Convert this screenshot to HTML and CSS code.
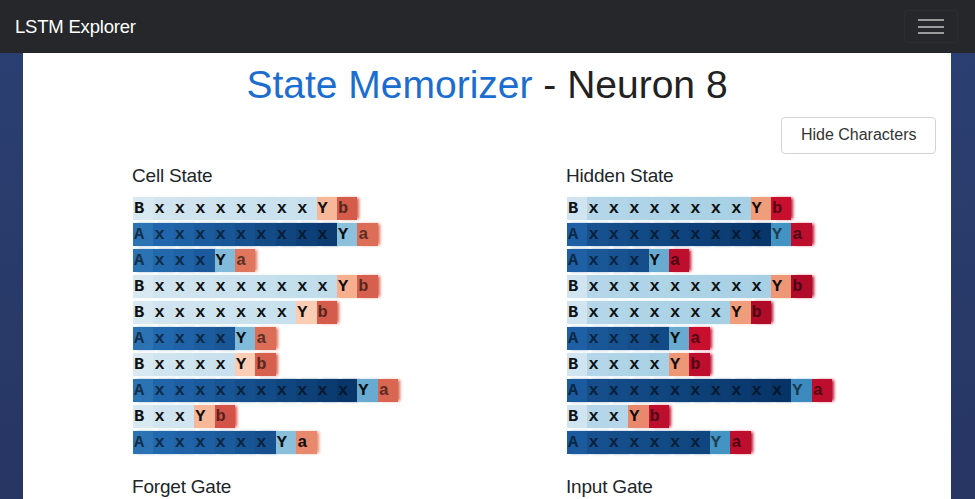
FILE: index.html
```html
<!DOCTYPE html>
<html lang="en">
<head>
    <meta charset="UTF-8">
    <meta name="viewport" content="width=device-width, initial-scale=1.0">
    <title>LSTM Explorer</title>
    <link rel="stylesheet" href="styles.css">
</head>
<body>
    <nav class="navbar">
        <a class="brand" href="#">LSTM Explorer</a>
        <button class="toggler" aria-label="Toggle navigation">
            <span class="bar"></span>
            <span class="bar"></span>
            <span class="bar"></span>
        </button>
    </nav>

    <main class="page">
        <div class="panel">
            <h1 class="title"><span class="title-name">State Memorizer</span> - Neuron 8</h1>
            <div class="toolbar">
                <button class="btn" id="toggleChars" onclick="toggleChars()">Hide Characters</button>
            </div>
            <div class="plots" id="plots"></div>
        </div>
    </main>

    <script src="script.js"></script>
</body>
</html>
```

FILE: styles.css
```css
body {
    font-family: "Liberation Sans", Arial, sans-serif;
    margin: 0;
    padding: 0;
    background: linear-gradient(180deg, #2b4173, #252f5a);
    color: #212529;
}

.navbar {
    height: 53px;
    background: #25272a;
    display: flex;
    align-items: center;
    justify-content: space-between;
    padding: 0 17px 0 15px;
}

.brand {
    color: #fff;
    font-size: 18.5px;
    text-decoration: none;
    letter-spacing: -0.2px;
}

.toggler {
    background: transparent;
    border: 1px solid rgba(255, 255, 255, 0.03);
    border-radius: 4px;
    padding: 8px 13px;
    display: flex;
    flex-direction: column;
    gap: 4.5px;
    cursor: pointer;
}

.toggler .bar {
    display: block;
    width: 26px;
    height: 2px;
    background: #9a9a9a;
}

.page {
    padding: 0 24px 0 23px;
}

.panel {
    background: #fff;
    padding-top: 9px;
    min-height: 600px;
}

.title {
    margin: 0;
    text-align: center;
    font-size: 39px;
    font-weight: normal;
    line-height: 1.2;
    color: #222;
}

.title-name {
    color: #1c6dd0;
}

.toolbar {
    display: flex;
    justify-content: flex-end;
    padding-right: 15px;
    margin-top: 8px;
}

.btn {
    font-family: inherit;
    font-size: 16px;
    line-height: 1.5;
    padding: 5.5px 18.5px;
    color: #333;
    background: #fff;
    border: 1px solid #d4d4d4;
    border-radius: 4px;
    cursor: pointer;
}

.btn:hover {
    background: #f2f2f2;
}

.plots {
    display: grid;
    grid-template-columns: 434px 434px;
    row-gap: 22px;
    padding-left: 109px;
    margin-top: 11px;
}

.plot h3 {
    margin: 0 0 9px;
    font-size: 19px;
    font-weight: normal;
    line-height: 1.2;
    letter-spacing: -0.2px;
}

.seq {
    display: flex;
    flex-direction: column;
    gap: 3px;
    padding-left: 1px;
}

.seq-row {
    display: flex;
    height: 23px;
}

.cell {
    width: 20.4px;
    height: 23px;
    line-height: 23px;
    padding-left: 1px;
    box-sizing: border-box;
    font-family: "Courier New", "Liberation Mono", monospace;
    font-weight: bold;
    font-size: 17px;
}

.plots.hide-chars .cell {
    color: transparent !important;
}
```

FILE: script.js
```js
// RdBu-ish colour scale, blue for negative, red for positive
const STOPS = [
    [-1, [5, 48, 97]],
    [-0.75, [33, 102, 172]],
    [-0.5, [67, 147, 195]],
    [-0.25, [146, 197, 222]],
    [-0.1, [209, 229, 240]],
    [0, [247, 247, 247]],
    [0.1, [253, 219, 199]],
    [0.25, [244, 165, 130]],
    [0.5, [214, 96, 77]],
    [0.8, [200, 16, 46]],
    [1, [103, 0, 31]]
];

const SEQUENCES = [
    'BxxxxxxxxYb',
    'AxxxxxxxxxYa',
    'AxxxYa',
    'BxxxxxxxxxYb',
    'BxxxxxxxYb',
    'AxxxxYa',
    'BxxxxYb',
    'AxxxxxxxxxxYa',
    'BxxYb',
    'AxxxxxxYa'
];

// [first char, first x, last x, Y, last char]
const PLOTS = [
    { name: 'Cell State', params: [
        [-0.08, -0.1, -0.12, 0.2, 0.52],
        [-0.68, -0.75, -0.95, -0.27, 0.45],
        [-0.68, -0.74, -0.8, -0.3, 0.42],
        [-0.08, -0.1, -0.14, 0.22, 0.5],
        [-0.08, -0.1, -0.12, 0.14, 0.52],
        [-0.68, -0.74, -0.82, -0.3, 0.45],
        [-0.08, -0.1, -0.12, 0.14, 0.5],
        [-0.68, -0.76, -0.97, -0.38, 0.48],
        [-0.08, -0.1, -0.1, 0.2, 0.55],
        [-0.68, -0.74, -0.85, -0.28, 0.35]
    ]},
    { name: 'Hidden State', params: [
        [-0.1, -0.17, -0.2, 0.28, 0.8],
        [-0.78, -0.85, -0.97, -0.5, 0.82],
        [-0.78, -0.82, -0.86, -0.38, 0.82],
        [-0.1, -0.17, -0.2, 0.3, 0.85],
        [-0.1, -0.17, -0.2, 0.28, 0.85],
        [-0.78, -0.82, -0.88, -0.38, 0.8],
        [-0.1, -0.17, -0.2, 0.3, 0.82],
        [-0.8, -0.86, -0.98, -0.55, 0.82],
        [-0.1, -0.17, -0.17, 0.35, 0.82],
        [-0.8, -0.85, -0.9, -0.5, 0.82]
    ]},
    { name: 'Forget Gate', params: SEQUENCES.map(() => [0.6, 0.7, 0.8, 0.3, -0.2]) },
    { name: 'Input Gate', params: SEQUENCES.map(() => [0.4, -0.1, -0.2, 0.5, 0.6]) }
];

function scaleColor(v) {
    for (let i = 1; i < STOPS.length; i++) {
        const [v0, c0] = STOPS[i - 1];
        const [v1, c1] = STOPS[i];
        if (v <= v1) {
            const t = (v - v0) / (v1 - v0);
            return c0.map((c, k) => Math.round(c + (c1[k] - c) * t));
        }
    }
    return STOPS[STOPS.length - 1][1];
}

function rowValues(seq, p) {
    const n = seq.length;
    const xs = n - 3;
    return seq.split('').map((ch, i) => {
        if (i === 0) return p[0];
        if (i === n - 1) return p[4];
        if (i === n - 2) return p[3];
        const t = xs > 1 ? (i - 1) / (xs - 1) : 0;
        return p[1] + (p[2] - p[1]) * t;
    });
}

function renderPlots() {
    const container = document.getElementById('plots');

    PLOTS.forEach(plot => {
        const box = document.createElement('div');
        box.className = 'plot';
        box.innerHTML = `<h3>${plot.name}</h3>`;

        const seqBox = document.createElement('div');
        seqBox.className = 'seq';

        plot.params.forEach((p, r) => {
            const seq = SEQUENCES[r];
            const row = document.createElement('div');
            row.className = 'seq-row';
            const values = rowValues(seq, p);

            seq.split('').forEach((ch, i) => {
                const [cr, cg, cb] = scaleColor(values[i]);
                const lum = (0.299 * cr + 0.587 * cg + 0.114 * cb) / 255;
                const k = lum > 0.6 ? 0.08 : 0.42;
                const cell = document.createElement('span');
                cell.className = 'cell';
                cell.textContent = ch;
                cell.style.background = `rgb(${cr}, ${cg}, ${cb})`;
                cell.style.boxShadow = `3px 0 3px -1px rgb(${cr}, ${cg}, ${cb})`;
                cell.style.color = `rgb(${Math.round(cr * k)}, ${Math.round(cg * k)}, ${Math.round(cb * k)})`;
                row.appendChild(cell);
            });

            seqBox.appendChild(row);
        });

        box.appendChild(seqBox);
        container.appendChild(box);
    });
}

function toggleChars() {
    const plots = document.getElementById('plots');
    const btn = document.getElementById('toggleChars');
    plots.classList.toggle('hide-chars');
    btn.innerText = plots.classList.contains('hide-chars') ? 'Show Characters' : 'Hide Characters';
}

renderPlots();
```
